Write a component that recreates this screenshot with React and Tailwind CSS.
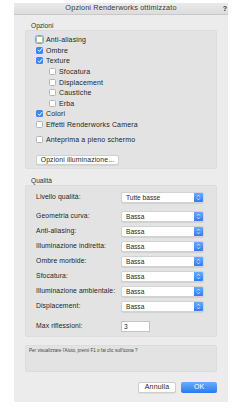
import { useState } from 'react';

const FONT = { fontFamily: '"Liberation Sans", Arial, sans-serif' };

const CHECKS = [
  { label: 'Anti-aliasing', checked: false, focus: true },
  { label: 'Ombre', checked: true },
  { label: 'Texture', checked: true },
  { label: 'Sfocatura', checked: false, sub: true },
  { label: 'Displacement', checked: false, sub: true },
  { label: 'Caustiche', checked: false, sub: true },
  { label: 'Erba', checked: false, sub: true },
  { label: 'Colori', checked: true },
  { label: 'Effetti Renderworks Camera', checked: false },
];

const QUALITY = [
  ['Geometria curva:', 'Bassa'],
  ['Anti-aliasing:', 'Bassa'],
  ['Illuminazione indiretta:', 'Bassa'],
  ['Ombre morbide:', 'Bassa'],
  ['Sfocatura:', 'Bassa'],
  ['Illuminazione ambientale:', 'Bassa'],
  ['Displacement:', 'Bassa'],
];

function Box({ checked, focus }) {
  if (checked) {
    return (
      <span className="w-[7px] h-[7px] rounded-[1.5px] bg-[#3a87f4] flex items-center justify-center shrink-0">
        <svg width="6" height="6" viewBox="0 0 6 6">
          <path d="M1.2 3.1 L2.5 4.4 L4.9 1.4" fill="none" stroke="white" strokeWidth="1" strokeLinecap="round" strokeLinejoin="round" />
        </svg>
      </span>
    );
  }
  return (
    <span
      className={`w-[7px] h-[7px] rounded-[1.5px] bg-white border border-[#b5b5b5] shrink-0 ${focus ? 'outline-[1.5px] outline outline-[#6aa7f7] border-[#7fb0ef]' : ''}`}
    />
  );
}

function Select({ value }) {
  return (
    <div className="w-[83px] h-[11px] flex bg-white rounded-[2px] border border-[#d2d2d2] shadow-[0_0.5px_0.5px_rgba(0,0,0,0.15)] overflow-hidden">
      <span className="flex-1 pl-[4px] text-[6.6px] leading-[9px]">{value}</span>
      <span className="w-[9px] h-full bg-gradient-to-b from-[#66acfa] to-[#2f7bf2] flex items-center justify-center">
        <svg width="5" height="7" viewBox="0 0 5 7">
          <path d="M1.1 2.6 L2.5 1.2 L3.9 2.6 M1.1 4.4 L2.5 5.8 L3.9 4.4" fill="none" stroke="white" strokeWidth="0.8" />
        </svg>
      </span>
    </div>
  );
}

export default function App() {
  const [checks] = useState(CHECKS);

  return (
    <div className="w-[242px] h-[410px] bg-white text-[#1f1f1f] overflow-hidden" style={FONT}>
      <div className="ml-[14px] mt-[3px] w-[214px] h-[399px] bg-[#ececec] flex flex-col">
        <div className="h-[12px] bg-gradient-to-b from-[#ebebeb] to-[#dcdcdc] border-b border-[#c9c9c9] relative flex items-center justify-center">
          <span className="text-[7.3px] tracking-[0.15px] text-[#3a3a3a]">Opzioni Renderworks ottimizzato</span>
          <span className="absolute right-[1px] top-[1px] text-[7px] font-bold text-[#333]">?</span>
        </div>

        <div className="px-[11px] pr-[11px] flex flex-col">
          <div className="mt-[5.5px] h-[9px] pl-[6px] text-[6.6px] leading-[9px] text-[#333]">Opzioni</div>
          <div className="h-[139px] bg-[#e3e3e3] border border-[#dcdcdc] rounded-[2px] pl-[10px] pt-[4px] flex flex-col">
            {checks.map(c => (
              <div key={c.label} className={`h-[10.6px] flex items-center gap-[3px] ${c.sub ? 'pl-[13px]' : ''}`}>
                <Box checked={c.checked} focus={c.focus} />
                <span className="text-[7px] tracking-[0.15px] leading-[9px]">{c.label}</span>
              </div>
            ))}
            <div className="mt-[4.6px] h-[10px] flex items-center gap-[3px]">
              <Box checked={false} />
              <span className="text-[7px] tracking-[0.15px] leading-[9px]">Anteprima a pieno schermo</span>
            </div>
            <div className="mt-[11px] w-[83px] h-[10px] bg-white border border-[#cfcfcf] rounded-[2px] shadow-[0_0.5px_0.5px_rgba(0,0,0,0.12)] flex items-center justify-center text-[6.8px] tracking-[0.15px] leading-[8px]">
              Opzioni illuminazione...
            </div>
          </div>

          <div className="mt-[7px] h-[9px] pl-[6px] text-[6.6px] leading-[9px] text-[#333]">Qualità</div>
          <div className="h-[152px] bg-[#e3e3e3] border border-[#dcdcdc] rounded-[2px] pl-[10px] pt-[4px] flex flex-col">
            <div className="h-[15px] flex items-center">
              <span className="w-[85px] text-[6.8px] tracking-[0.1px]">Livello qualità:</span>
              <Select value="Tutte basse" />
            </div>
            <div className="mt-[4.5px] flex flex-col">
              {QUALITY.map(([label, value]) => (
                <div key={label} className="h-[15px] flex items-center">
                  <span className="w-[85px] text-[6.8px] tracking-[0.1px] whitespace-nowrap">{label}</span>
                  <Select value={value} />
                </div>
              ))}
            </div>
            <div className="mt-[4.5px] h-[15px] flex items-center">
              <span className="w-[85px] text-[6.8px] tracking-[0.1px]">Max riflessioni:</span>
              <div className="w-[29px] h-[11px] bg-white border border-[#c4c4c4] pl-[2px] text-[6.6px] leading-[9px]">3</div>
            </div>
          </div>

          <div className="mt-[8px] h-[27px] bg-[#e3e3e3] border border-[#dcdcdc] rounded-[2px] pl-[3px] pt-[2px]">
            <span className="text-[4.6px] leading-[6px] text-[#444] block">Per visualizzare l'Aiuto, premi F1 o fai clic sull'icona ?</span>
          </div>

          <div className="mt-[10px] flex justify-end gap-[5px]">
            <div className="w-[38px] h-[11px] bg-white border border-[#cdcdcd] rounded-[2px] shadow-[0_0.5px_0.5px_rgba(0,0,0,0.12)] flex items-center justify-center text-[7px] tracking-[0.15px]">
              Annulla
            </div>
            <div className="w-[36px] h-[11px] rounded-[2px] bg-gradient-to-b from-[#68adfa] to-[#2a78f0] flex items-center justify-center text-[7px] text-white">
              OK
            </div>
          </div>
        </div>
      </div>
    </div>
  );
}
